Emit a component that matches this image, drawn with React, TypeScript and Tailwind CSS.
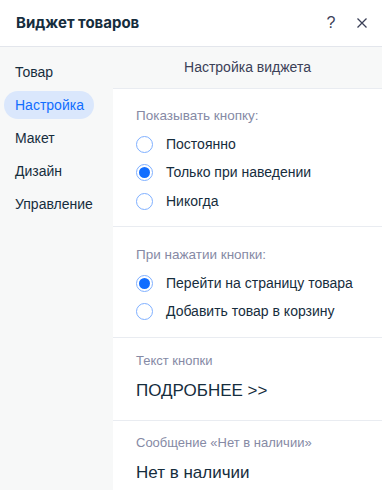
const tabs = ["Товар", "Настройка", "Макет", "Дизайн", "Управление"];

function Radio({ label, checked }: { label: string; checked?: boolean }) {
  return (
    <div className="flex h-[28.5px] items-center">
      <span className="flex h-[17px] w-[17px] items-center justify-center rounded-full border border-[#7fb0ff] bg-white">
        {checked && <span className="h-[11px] w-[11px] rounded-full bg-[#116dff]" />}
      </span>
      <span className="ml-[13px] text-[14px] text-[#162d3d]">{label}</span>
    </div>
  );
}

export default function App() {
  return (
    <div className="h-[490px] w-[382px] overflow-hidden bg-white font-['Liberation_Sans',sans-serif]">
      <div className="flex h-[47px] items-center border-b border-[#e3e6ec] pl-[16px] pr-[8px]">
        <h1 className="flex-1 font-['Inter',sans-serif] text-[15px] font-bold text-[#162d3d]">
          Виджет товаров
        </h1>
        <span className="w-[24px] text-center text-[16px] text-[#3b4057]">?</span>
        <span className="ml-[7px] flex w-[24px] justify-center">
          <svg width="12" height="12" viewBox="0 0 12 12">
            <path d="M1.5 1.5 L10.5 10.5 M10.5 1.5 L1.5 10.5" stroke="#3b4057" strokeWidth="1.3" />
          </svg>
        </span>
      </div>

      <div className="flex h-[443px] bg-[#f7f8f8]">
        <nav className="flex w-[113px] flex-col gap-[5px] pt-[11px]">
          {tabs.map((t) => (
            <div
              key={t}
              className={
                t === "Настройка"
                  ? "ml-[4px] flex h-[28px] w-[90px] items-center rounded-full bg-[#dae7fc] pl-[11px] text-[14px] text-[#116dff]"
                  : "ml-[4px] flex h-[28px] items-center pl-[11px] text-[14px] text-[#162d3d]"
              }
            >
              {t}
            </div>
          ))}
        </nav>

        <div className="flex flex-1 flex-col gap-px bg-[#e9ecf1]">
          <div className="flex h-[41px] items-center justify-center bg-[#f7f8f8] text-[14px] text-[#3b4057]">
            Настройка виджета
          </div>

          <section className="h-[137px] bg-white pl-[23px] pt-[17px]">
            <div className="h-[20px] text-[13.5px] leading-[20px] text-[#868aa5]">Показывать кнопку:</div>
            <div className="mt-[4px]">
              <Radio label="Постоянно" />
              <Radio label="Только при наведении" checked />
              <Radio label="Никогда" />
            </div>
          </section>

          <section className="h-[110px] bg-white pl-[23px] pt-[18px]">
            <div className="h-[20px] text-[13.5px] leading-[20px] text-[#868aa5]">При нажатии кнопки:</div>
            <div className="mt-[4px]">
              <Radio label="Перейти на страницу товара" checked />
              <Radio label="Добавить товар в корзину" />
            </div>
          </section>

          <section className="h-[82px] bg-white pl-[23px] pt-[14px]">
            <div className="h-[18px] text-[13px] leading-[18px] text-[#868aa5]">Текст кнопки</div>
            <div className="mt-[6px] h-[30px] text-[17px] leading-[30px] text-[#162d3d]">ПОДРОБНЕЕ &gt;&gt;</div>
          </section>

          <section className="flex-1 bg-white pl-[23px] pt-[13px]">
            <div className="h-[18px] text-[13px] leading-[18px] text-[#868aa5]">Сообщение «Нет в наличии»</div>
            <div className="mt-[6px] h-[30px] text-[17px] leading-[30px] text-[#162d3d]">Нет в наличии</div>
          </section>
        </div>
      </div>
    </div>
  );
}
